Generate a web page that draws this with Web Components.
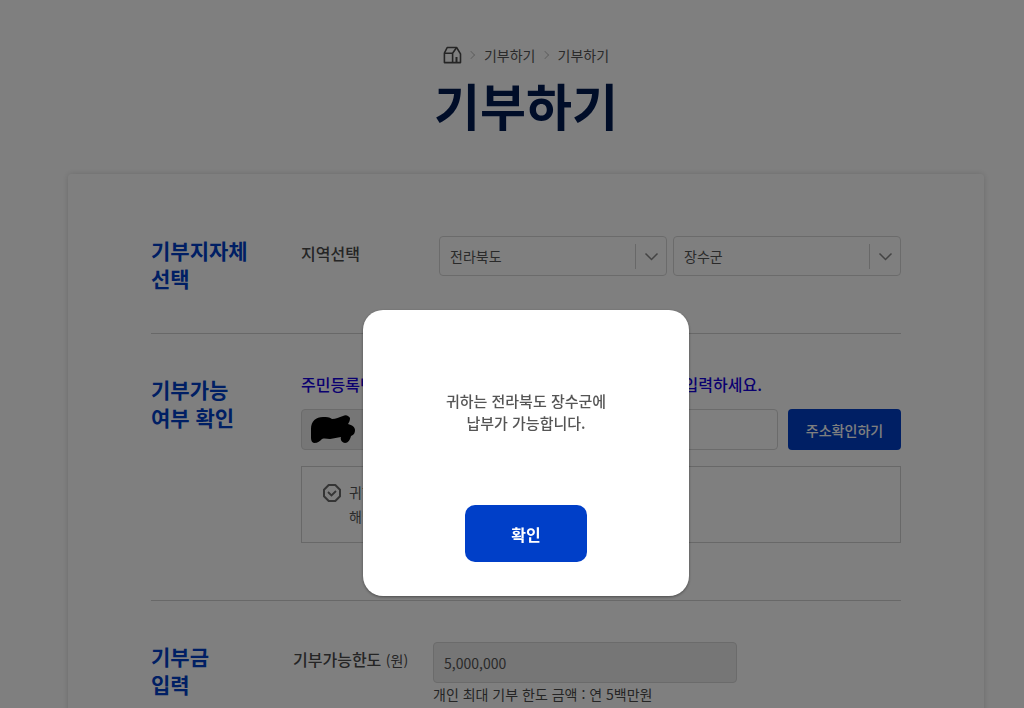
<!DOCTYPE html>
<html lang="ko">
<head>
<meta charset="utf-8">
<meta name="viewport" content="width=device-width, initial-scale=1">
<title>기부하기</title>
<style>
  :root {
    --color-primary: #003fc8;
    --color-title: #001a50;
    --color-text: #555;
    --color-text-strong: #4a4a4a;
    --color-border: #d6d6d6;
    --color-disabled: #ececec;
    --page-padding: 0 40px 0 68px;
  }
  body {
    margin: 0;
    height: 100vh;
    overflow: hidden;
    background: #fff;
    color: var(--color-text);
    font: 400 14px/20px "Noto Sans CJK KR", "Noto Sans", sans-serif;
  }
</style>
</head>
<body>
<donation-page>
  <bread-crumb slot="header">
    <a href="#donate">기부하기</a>
    <a href="#donate-form">기부하기</a>
  </bread-crumb>
  <span slot="title">기부하기</span>

  <form-section>
    <span slot="heading">기부지자체<br>선택</span>
    <region-select></region-select>
  </form-section>
  <form-section class="check">
    <span slot="heading">기부가능<br>여부 확인</span>
    <identity-check></identity-check>
  </form-section>
  <form-section class="amount">
    <span slot="heading">기부금<br>입력</span>
    <amount-field></amount-field>
  </form-section>
</donation-page>

<confirm-dialog button="확인">귀하는 전라북도 장수군에<br>납부가 가능합니다.</confirm-dialog>

<script>
class DonationPage extends HTMLElement {
  constructor() {
    super();
    this.attachShadow({ mode: 'open' });
  }

  connectedCallback() {
    this.shadowRoot.innerHTML = `
      <style>
        :host {
          display: block;
          padding: var(--page-padding);
        }

        header {
          display: flex;
          flex-direction: column;
          align-items: center;
          padding-top: 45px;
        }

        h1 {
          margin: 6px 0 37px;
          color: var(--color-title);
          font-size: 50px;
          font-weight: 700;
          line-height: 66px;
        }

        main {
          box-sizing: border-box;
          padding: 62px 83px;
          background: #fff;
          border-radius: 4px;
          box-shadow: 0 0 6px rgba(0, 0, 0, 0.16);
        }
      </style>
      <header>
        <slot name="header"></slot>
        <h1><slot name="title"></slot></h1>
      </header>
      <main><slot></slot></main>
    `;
  }
}

class BreadCrumb extends HTMLElement {
  constructor() {
    super();
    this.attachShadow({ mode: 'open' });
  }

  connectedCallback() {
    this.shadowRoot.innerHTML = `
      <style>
        :host {
          display: block;
        }

        nav {
          display: flex;
          align-items: center;
        }

        .home {
          display: flex;
          color: #4a4a4a;
        }

        ::slotted(a) {
          display: flex;
          align-items: center;
          color: #555;
          text-decoration: none;
        }

        ::slotted(a)::before {
          content: "";
          width: 5px;
          height: 5px;
          margin: 0 10px 0 6px;
          border: solid #ccc;
          border-width: 1px 1px 0 0;
          transform: rotate(45deg);
        }
      </style>
      <nav aria-label="breadcrumb">
        <a class="home" href="#home" aria-label="홈">
          <svg width="19" height="18" viewBox="0 0 19 18" fill="none" stroke="currentColor" stroke-width="1.6" stroke-linejoin="round">
            <path d="M1.400 16.600V7.200l2.800-5.700h9.400l3.900 6.300v8.800z"/>
            <path d="M1.400 7.200h8.200v9.400M9.600 7.200l4-5.700"/>
            <path d="M13.500 16.600V11" stroke-width="2"/>
          </svg>
        </a>
        <slot></slot>
      </nav>
    `;
  }
}

class FormSection extends HTMLElement {
  constructor() {
    super();
    this.attachShadow({ mode: 'open' });
  }

  connectedCallback() {
    this.shadowRoot.innerHTML = `
      <style>
        :host {
          display: grid;
          grid-template-columns: 150px 1fr;
          padding-bottom: 41px;
          margin-bottom: 41px;
          border-bottom: 1px solid #d0d0d0;
        }

        :host(.check) {
          padding-bottom: 57px;
        }

        :host(.amount) {
          grid-template-columns: 142px 1fr;
          border-bottom: 0;
        }

        h2 {
          margin: 0;
          color: var(--color-primary);
          font-size: 21px;
          font-weight: 700;
          line-height: 28px;
        }
      </style>
      <h2><slot name="heading"></slot></h2>
      <slot></slot>
    `;
  }
}

class RegionSelect extends HTMLElement {
  constructor() {
    super();
    this.attachShadow({ mode: 'open' });
  }

  connectedCallback() {
    this.shadowRoot.innerHTML = `
      <style>
        :host {
          display: flex;
          align-items: flex-start;
          gap: 6px;
        }

        label {
          width: 132px;
          color: var(--color-text-strong);
          font-size: 16px;
          font-weight: 500;
          line-height: 34px;
        }

        .select {
          display: grid;
          flex: 1;
          align-items: center;
        }

        .select > * {
          grid-area: 1 / 1;
        }

        select {
          appearance: none;
          box-sizing: border-box;
          width: 100%;
          height: 40px;
          padding: 0 40px 0 10px;
          border: 1px solid var(--color-border);
          border-radius: 4px;
          background: #fff;
          color: var(--color-text);
          font: inherit;
        }

        svg {
          justify-self: end;
          pointer-events: none;
        }
      </style>
      <label for="sido">지역선택</label>
      <div class="select">
        <select id="sido"><option>전라북도</option></select>
        ${this.arrow()}
      </div>
      <div class="select">
        <select aria-label="시군구"><option>장수군</option></select>
        ${this.arrow()}
      </div>
    `;
  }

  arrow() {
    return `
      <svg width="32" height="25" viewBox="0 0 32 25" fill="none">
        <path d="M.5 0v25" stroke="#d0d0d0"/>
        <path d="M10.500 9.500l6 6 6-6" stroke="#888" stroke-width="1.500"/>
      </svg>
    `;
  }
}

class IdentityCheck extends HTMLElement {
  constructor() {
    super();
    this.attachShadow({ mode: 'open' });
  }

  connectedCallback() {
    this.shadowRoot.innerHTML = `
      <style>
        :host {
          display: block;
        }

        .guide {
          display: flex;
          justify-content: space-between;
          max-width: 461px;
          margin-bottom: 16px;
          color: #1400e0;
          font-size: 16px;
          font-weight: 500;
          line-height: 18px;
        }

        .row {
          display: flex;
          gap: 10px;
        }

        .field {
          display: grid;
          flex: 1;
          align-items: center;
        }

        .field > * {
          grid-area: 1 / 1;
        }

        .field svg {
          margin-left: 9px;
        }

        input {
          box-sizing: border-box;
          width: 100%;
          height: 41px;
          padding: 0 11px;
          border: 1px solid var(--color-border);
          border-radius: 4px;
          background: #fff;
          font: inherit;
        }

        input[readonly] {
          background: var(--color-disabled);
        }

        button {
          width: 113px;
          height: 41px;
          padding: 0;
          border: 0;
          border-radius: 4px;
          background: var(--color-primary);
          color: #fff;
          font: inherit;
          font-weight: 500;
        }

        .notice {
          display: flex;
          gap: 7px;
          margin-top: 16px;
          padding: 13px 20px 14px;
          border: 1px solid #d0d0d0;
          line-height: 24px;
        }

        .notice svg {
          margin-top: 3px;
        }

        p {
          margin: 0;
        }
      </style>
      <label class="guide" for="number"><span>주민등록번</span><span>입력하세요.</span></label>
      <div class="row">
        <div class="field">
          <input aria-label="주민등록번호 앞자리" readonly>
          <svg width="46" height="30" viewBox="0 0 46 30">
            <path d="M1 14C1 6 6 2 13 2c4 0 6 0 9 2 4 0 7-2 11-3 3-2 6 0 7 2 0 3-1 4-2 6 4 1 7 3 7 6 0 3-1 5-4 6-1 4-3 7-6 7-3 0-5-3-4-6-4 1-7 1-11 2-3 0-5-1-8 0-2 2-4 4-8 4-3-1-3-4-3-7z"/>
          </svg>
        </div>
        <div class="field"><input id="number"></div>
        <button type="button">주소확인하기</button>
      </div>
      <div class="notice">
        <svg width="20" height="20" viewBox="0 0 20 20" fill="none" stroke="#6a6a6a">
          <path d="M6.700 2h6.600L18 6.700v6.600L13.300 18H6.700L2 13.300V6.700z" stroke-width="2" stroke-linejoin="round"/>
          <path d="M6 9l3.500 3.500L14 8" stroke-width="1.800"/>
        </svg>
        <p>귀하<br>해당</p>
      </div>
    `;
  }
}

class AmountField extends HTMLElement {
  constructor() {
    super();
    this.attachShadow({ mode: 'open' });
  }

  connectedCallback() {
    this.shadowRoot.innerHTML = `
      <style>
        :host {
          display: grid;
          grid-template-columns: 140px 1fr;
        }

        label {
          color: var(--color-text-strong);
          font-size: 16px;
          font-weight: 500;
          line-height: 34px;
        }

        small {
          font-size: 14px;
          font-weight: 400;
        }

        input {
          box-sizing: border-box;
          display: block;
          width: 65%;
          height: 41px;
          padding: 0 10px;
          border: 1px solid var(--color-border);
          border-radius: 4px;
          background: var(--color-disabled);
          color: var(--color-text);
          font: inherit;
        }

        p {
          margin: 1px 0 0;
          color: var(--color-text-strong);
        }
      </style>
      <label for="limit">기부가능한도 <small>(원)</small></label>
      <div>
        <input id="limit" value="5,000,000" readonly>
        <p>개인 최대 기부 한도 금액 : 연 5백만원</p>
      </div>
    `;
  }
}

class ConfirmDialog extends HTMLElement {
  constructor() {
    super();
    this.attachShadow({ mode: 'open' });
  }

  connectedCallback() {
    this.shadowRoot.innerHTML = `
      <style>
        /* dimmed layer over the whole page */
        :host {
          position: fixed;
          inset: 0;
          display: flex;
          justify-content: center;
          align-items: flex-start;
          box-sizing: border-box;
          padding: var(--page-padding);
          background: rgba(0, 0, 0, 0.5);
        }

        .dialog {
          box-sizing: border-box;
          display: flex;
          flex-direction: column;
          align-items: center;
          width: 326px;
          margin-top: 310px;
          padding: 80px 20px 34px;
          border-radius: 20px;
          background: #fff;
          box-shadow: 0 1px 3px rgba(0, 0, 0, 0.4);
        }

        p {
          margin: 0 0 71px;
          color: var(--color-text);
          font-size: 15px;
          font-weight: 500;
          line-height: 22px;
          text-align: center;
        }

        button {
          width: 122px;
          height: 57px;
          border: 0;
          border-radius: 10px;
          background: var(--color-primary);
          color: #fff;
          font: inherit;
          font-size: 16px;
          font-weight: 700;
        }
      </style>
      <div class="dialog" role="dialog" aria-modal="true">
        <p><slot></slot></p>
        <button type="button">${this.getAttribute('button')}</button>
      </div>
    `;
    this.shadowRoot.querySelector('button').addEventListener('click', () => this.remove());
  }
}

customElements.define('donation-page', DonationPage);
customElements.define('bread-crumb', BreadCrumb);
customElements.define('form-section', FormSection);
customElements.define('region-select', RegionSelect);
customElements.define('identity-check', IdentityCheck);
customElements.define('amount-field', AmountField);
customElements.define('confirm-dialog', ConfirmDialog);
</script>
</body>
</html>
